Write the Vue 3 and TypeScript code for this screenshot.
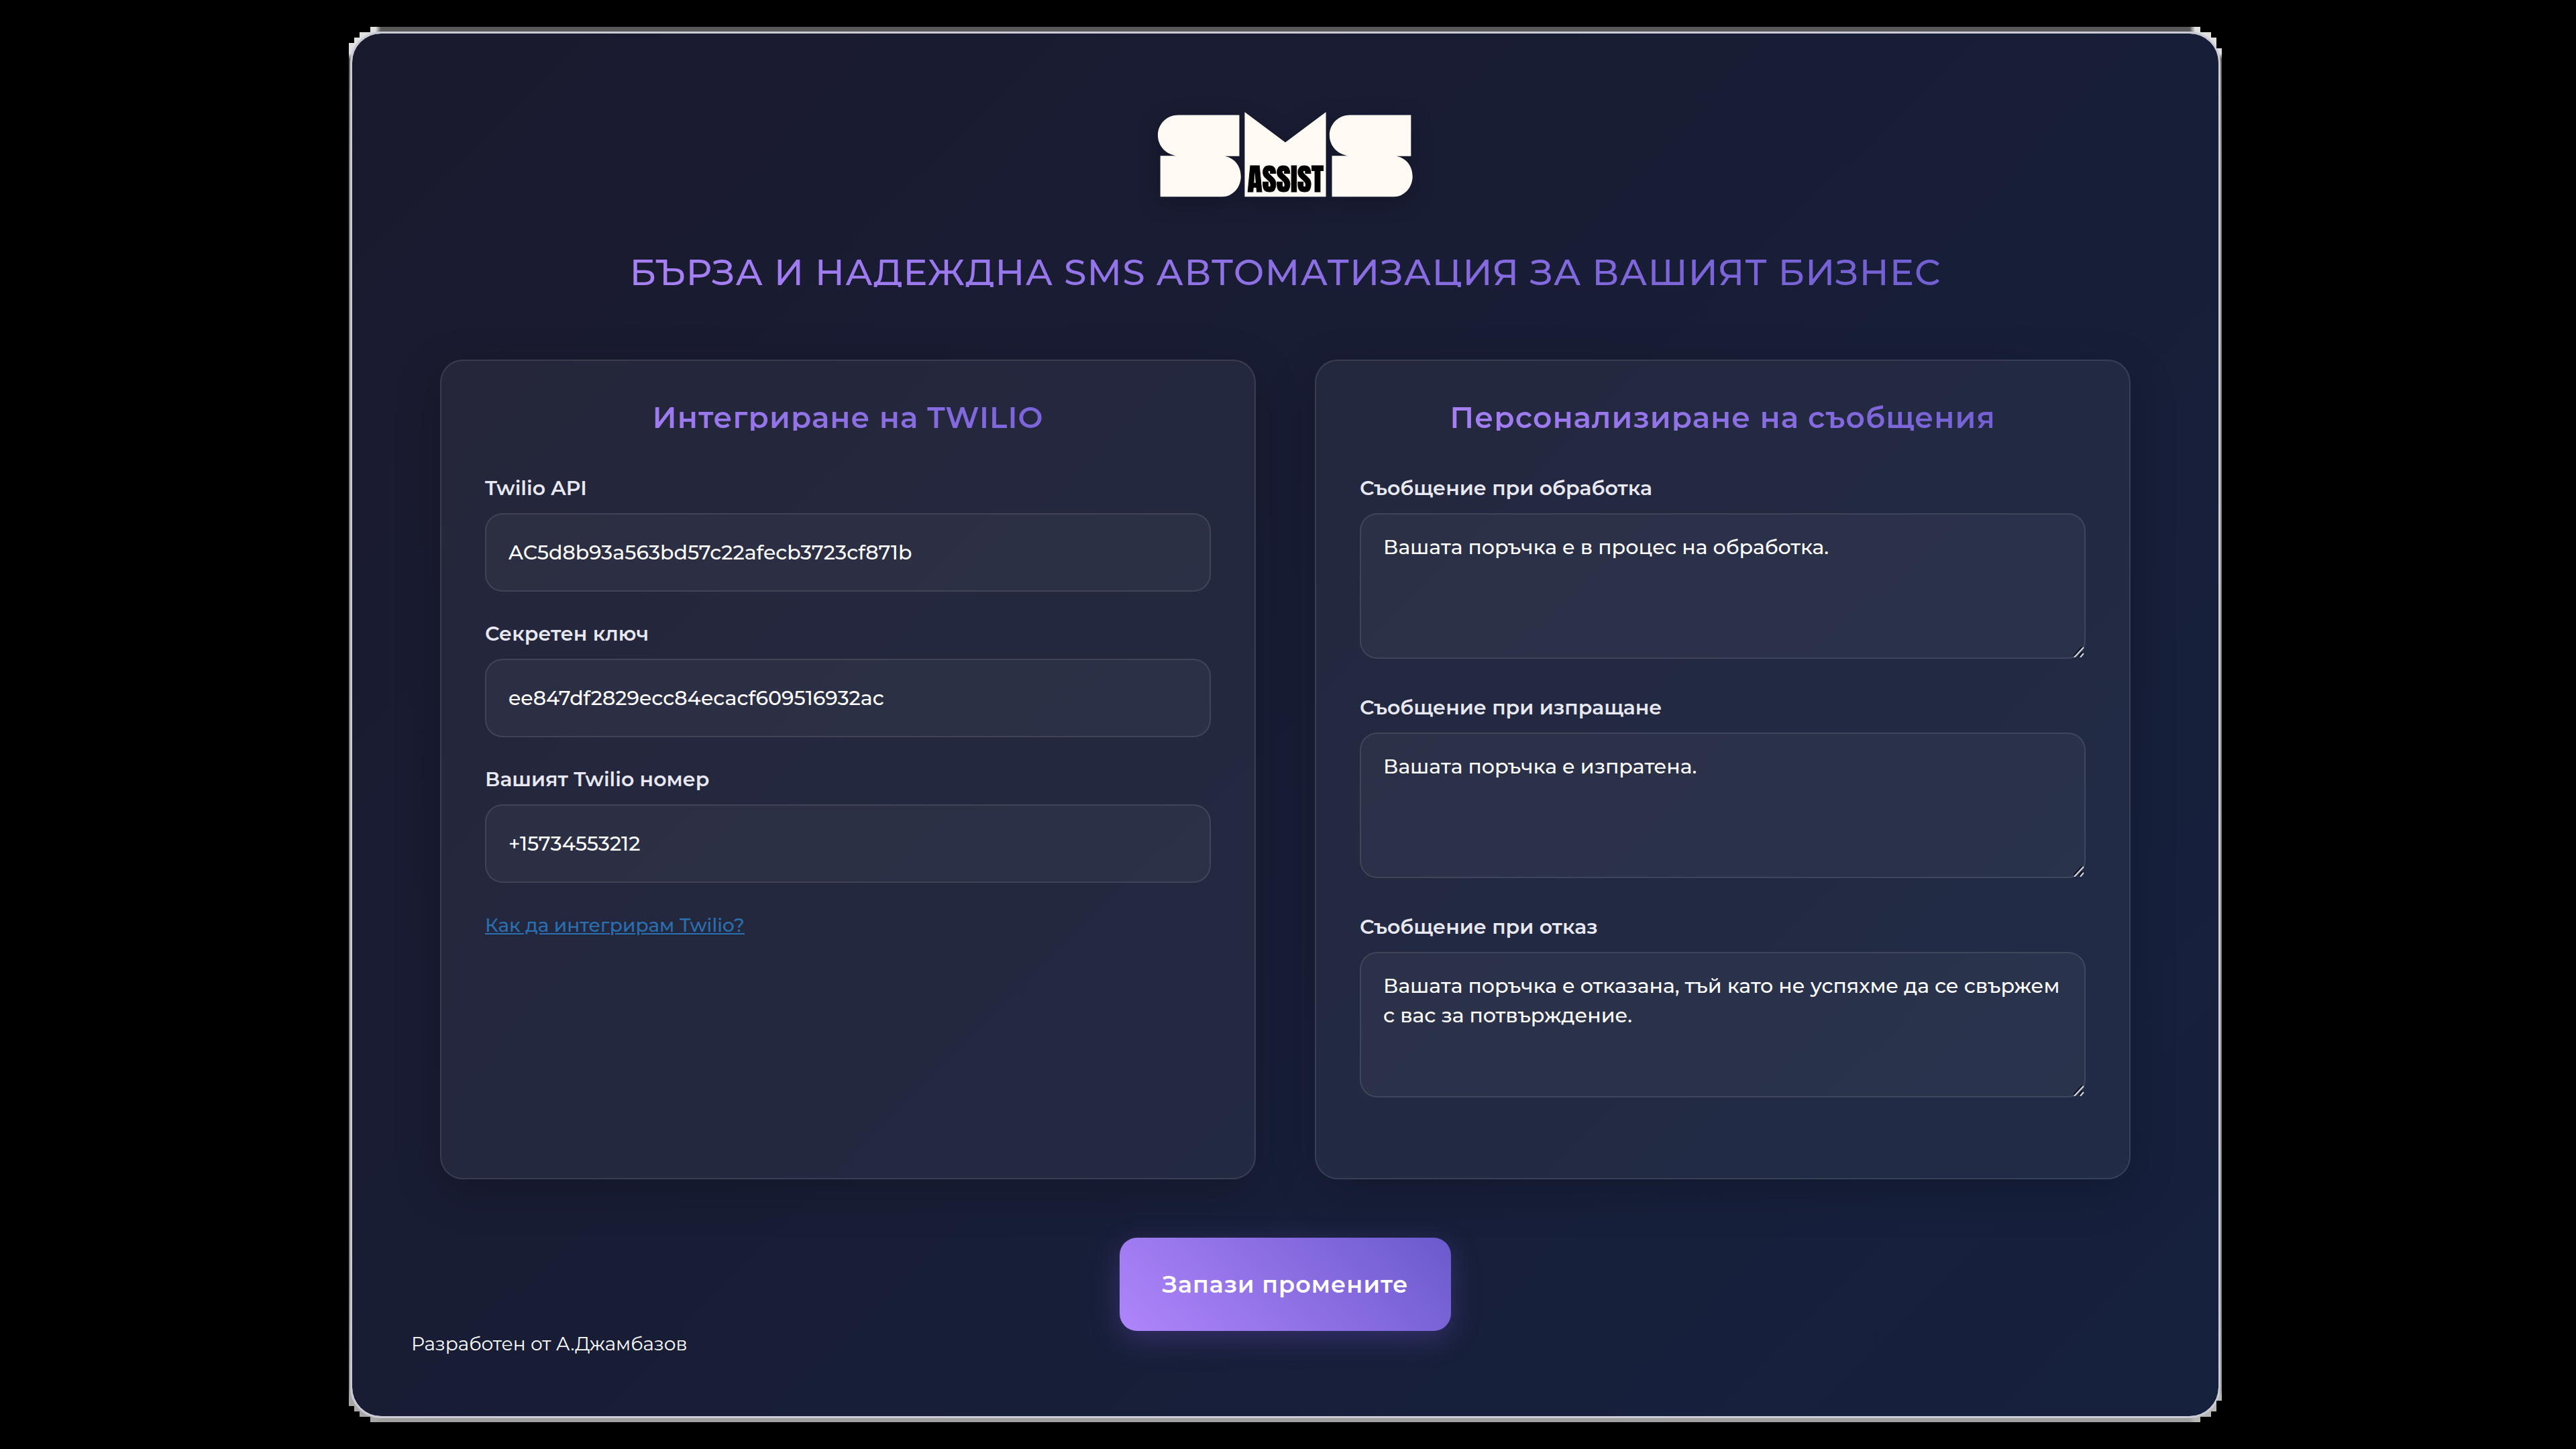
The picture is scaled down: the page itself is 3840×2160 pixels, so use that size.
<script setup lang="ts">
import { ref } from 'vue'

interface Field {
  id: string
  label: string
  value: string
}

const credentials = ref<Field[]>([
  { id: 'api', label: 'Twilio API', value: 'AC5d8b93a563bd57c22afecb3723cf871b' },
  { id: 'secret', label: 'Секретен ключ', value: 'ee847df2829ecc84ecacf609516932ac' },
  { id: 'number', label: 'Вашият Twilio номер', value: '+15734553212' },
])

const messages = ref<Field[]>([
  { id: 'processing', label: 'Съобщение при обработка', value: 'Вашата поръчка е в процес на обработка.' },
  { id: 'shipping', label: 'Съобщение при изпращане', value: 'Вашата поръчка е изпратена.' },
  {
    id: 'cancelled',
    label: 'Съобщение при отказ',
    value: 'Вашата поръчка е отказана, тъй като не успяхме да се свържем с вас за потвърждение.',
  },
])
</script>

<template>
  <div class="page">
    <div class="frame">
      <main class="panel">
        <form class="content" @submit.prevent>
          <svg class="logo" viewBox="136 112 1142 381" role="img" aria-label="SMS Assist">
            <g fill="#fffaf3">
              <path id="letter-s" d="M228 125H501V309H436C482 318 508 356 508 400C508 450 470 491 425 491H147V308H222C170 301 136 262 136 215C136 165 176 125 228 125Z" />
              <path d="M525 112L707 248L889 112V491H525Z" />
              <use href="#letter-s" x="769" />
            </g>
            <text class="logo-word" x="708" y="469" text-anchor="middle">ASSIST</text>
          </svg>

          <h1 class="title">БЪРЗА И НАДЕЖДНА SMS АВТОМАТИЗАЦИЯ ЗА ВАШИЯТ БИЗНЕС</h1>

          <div class="cards">
            <section class="card">
              <h2 class="card-title">Интегриране на TWILIO</h2>
              <div v-for="field in credentials" :key="field.id" class="field">
                <label :for="field.id">{{ field.label }}</label>
                <input :id="field.id" v-model="field.value" class="control" type="text" />
              </div>
              <a class="help" href="#">Как да интегрирам Twilio?</a>
            </section>

            <section class="card">
              <h2 class="card-title">Персонализиране на съобщения</h2>
              <div v-for="field in messages" :key="field.id" class="field field-message">
                <label :for="field.id">{{ field.label }}</label>
                <div class="message-box">
                  <textarea :id="field.id" v-model="field.value" class="control" spellcheck="false"></textarea>
                  <svg class="grip" viewBox="0 0 16 16" aria-hidden="true">
                    <path d="M0 14L13 0M8 14L13 8" stroke="#10101c" stroke-width="2" />
                    <path d="M1 16L15 1M10 16L15 10" stroke="#d8d8e0" stroke-width="2" />
                  </svg>
                </div>
              </div>
            </section>
          </div>

          <button class="save" type="submit">Запази промените</button>
        </form>
        <footer class="footer">Разработен от А.Джамбазов</footer>
      </main>
    </div>
  </div>
</template>

<style>
body {
  margin: 0;
  background: #000;
}
</style>

<style scoped>
* {
  box-sizing: border-box;
}

.page {
  padding: 40px 528px 40px 520px;
  background: #000;
  color: #fff;
  font-family: Montserrat, Inter, "Noto Sans", sans-serif;
  font-size: 30px;
  line-height: 38px;
}

/* Grey backing with stepped corners behind the rounded panel */
.frame {
  padding: 7px 2px 6px;
  background:
    radial-gradient(circle at 0 0, #e0e0e0 40px, transparent 48px),
    radial-gradient(circle at 100% 0, #e0e0e0 40px, transparent 48px),
    radial-gradient(circle at 0 100%, #a8a8a8 40px, transparent 48px),
    radial-gradient(circle at 100% 100%, #b8b8b4 40px, transparent 48px),
    linear-gradient(#585858, #808080 10%, #808080 90%, #a0a0a0);
  clip-path: polygon(
    32px 0, calc(100% - 32px) 0, calc(100% - 32px) 8px, calc(100% - 16px) 8px,
    calc(100% - 16px) 16px, calc(100% - 8px) 16px, calc(100% - 8px) 32px, 100% 32px,
    100% calc(100% - 32px), calc(100% - 8px) calc(100% - 32px), calc(100% - 8px) calc(100% - 16px),
    calc(100% - 16px) calc(100% - 16px), calc(100% - 16px) calc(100% - 8px), calc(100% - 32px) calc(100% - 8px),
    calc(100% - 32px) 100%, 32px 100%, 32px calc(100% - 8px), 16px calc(100% - 8px),
    16px calc(100% - 16px), 8px calc(100% - 16px), 8px calc(100% - 24px), 0 calc(100% - 24px),
    0 24px, 8px 24px, 8px 16px, 16px 16px, 16px 8px, 32px 8px
  );
}

.panel {
  padding: 117px 88px 89px;
  border: 3px solid #cbcbd5;
  border-radius: 46px;
  background: linear-gradient(135deg, #1a1a2e, #16213e) padding-box, #cbcbd5;
}

.content {
  display: flex;
  flex-direction: column;
  align-items: center;
  padding: 0 43px;
}

.logo {
  display: block;
  width: 380px;
  height: 127px;
  overflow: visible;
  filter: drop-shadow(0 8px 16px rgba(0, 0, 0, 0.2));
}

.logo-word {
  fill: #000;
  stroke: #000;
  stroke-width: 3px;
  font-family: Anton, "League Gothic", "Liberation Sans Narrow", sans-serif;
  font-size: 137px;
}

.title,
.card-title {
  width: 100%;
  margin: 0;
  background: linear-gradient(45deg, #b085fb, #6a5acd);
  background-clip: text;
  -webkit-background-clip: text;
  color: transparent;
  text-align: center;
}

.title {
  margin: 90px 0 108px;
  font-size: 54px;
  font-weight: 500;
  line-height: 44px;
  letter-spacing: 1px;
}

.cards {
  display: grid;
  grid-template-columns: 1fr 1fr;
  gap: 88px;
  width: 100%;
}

.card {
  padding: 64px 65px 66px;
  border: 2px solid rgba(255, 255, 255, 0.1);
  border-radius: 34px;
  background: rgba(255, 255, 255, 0.05);
  box-shadow: 0 18px 70px rgba(0, 0, 0, 0.2);
}

.card-title {
  margin-bottom: 67px;
  font-size: 44px;
  font-weight: 600;
  line-height: 40px;
  letter-spacing: 1px;
}

.field {
  display: flex;
  flex-direction: column;
  gap: 18px;
  margin-bottom: 44px;
}

.field-message {
  margin-bottom: 54px;
}

label {
  color: #e8e8f2;
  font-weight: 600;
}

.control {
  display: block;
  width: 100%;
  height: 117px;
  margin: 0;
  padding: 0 33px;
  border: 2px solid rgba(255, 255, 255, 0.1);
  border-radius: 26px;
  outline: 0;
  background: rgba(255, 255, 255, 0.04);
  color: #fff;
  font: inherit;
  font-weight: 500;
}

.message-box {
  position: relative;
}

textarea.control {
  height: 217px;
  padding: 27px 33px;
  line-height: 44px;
  resize: vertical;
}

textarea::-webkit-resizer {
  background: transparent;
}

.grip {
  position: absolute;
  right: 2px;
  bottom: 2px;
  width: 16px;
  height: 16px;
  pointer-events: none;
}

.help {
  color: #2a70b0;
  font-size: 28px;
  font-weight: 500;
}

.save {
  height: 139px;
  margin: 87px 0 0;
  padding: 0 64px;
  border: 0;
  border-radius: 26px;
  background: linear-gradient(45deg, #b085fb, #6a5acd);
  box-shadow: 0 12px 44px rgba(120, 90, 220, 0.3);
  color: #fff;
  font: inherit;
  font-size: 35px;
  font-weight: 600;
  letter-spacing: 1px;
}

.footer {
  font-size: 28px;
}
</style>
